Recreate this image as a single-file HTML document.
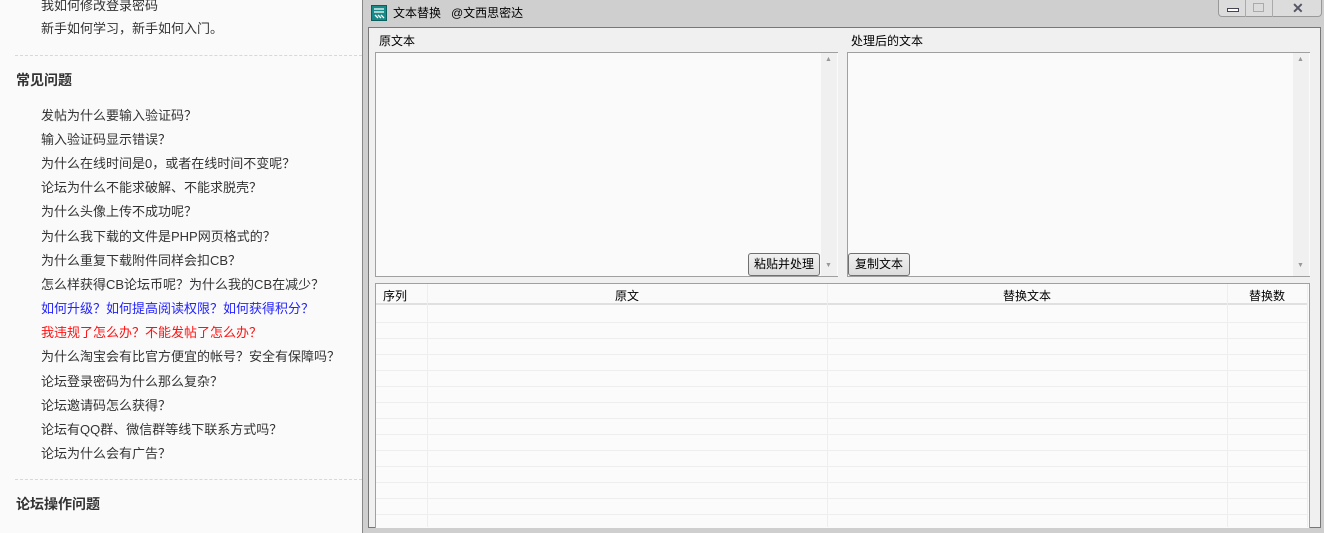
<!DOCTYPE html>
<html><head><meta charset="utf-8"><style>
*{margin:0;padding:0;box-sizing:border-box}
body{width:1324px;height:533px;overflow:hidden;background:#fafafa;position:relative;font-family:"Liberation Sans","Noto Sans CJK SC",sans-serif;}
.t{position:absolute;font-size:13px;line-height:24px;color:#333;white-space:nowrap}
.h{font-weight:bold;font-size:14px;color:#333}
.dash{position:absolute;left:15px;width:347px;border-top:1px dashed #d8d8d8}
.win{position:absolute;left:362px;top:0;width:962px;height:533px;background:#cfcfcf;border-left:1px solid #888;}
.a{position:absolute}
.ws{font-size:12px;color:#000;line-height:16px;white-space:nowrap}
.btn{position:absolute;height:23px;border:1px solid #707070;border-radius:3px;background:linear-gradient(#f2f2f2,#dcdcdc);font-size:12px;line-height:21px;text-align:center;color:#000}
.sb{position:absolute;width:16px;background:#f0f0f0}
.row{position:absolute;left:376px;width:931px;height:1px;background:#eee}
.col{position:absolute;width:1px;background:#eee}
</style></head><body>
<div class="t" style="left:41px;top:-6px">我如何修改登录密码</div>
<div class="t" style="left:41px;top:17px">新手如何学习，新手如何入门。</div>
<div class="dash" style="top:55px"></div>
<div class="t h" style="left:16px;top:68px">常见问题</div>
<div class="t" style="left:41px;top:104px">发帖为什么要输入验证码？</div>
<div class="t" style="left:41px;top:128px">输入验证码显示错误？</div>
<div class="t" style="left:41px;top:152px">为什么在线时间是0，或者在线时间不变呢？</div>
<div class="t" style="left:41px;top:176px">论坛为什么不能求破解、不能求脱壳？</div>
<div class="t" style="left:41px;top:200px">为什么头像上传不成功呢？</div>
<div class="t" style="left:41px;top:225px">为什么我下载的文件是PHP网页格式的？</div>
<div class="t" style="left:41px;top:249px">为什么重复下载附件同样会扣CB？</div>
<div class="t" style="left:41px;top:273px">怎么样获得CB论坛币呢？为什么我的CB在减少？</div>
<div class="t" style="left:41px;top:297px;color:#22f">如何升级？如何提高阅读权限？如何获得积分？</div>
<div class="t" style="left:41px;top:321px;color:#f11">我违规了怎么办？不能发帖了怎么办？</div>
<div class="t" style="left:41px;top:345px">为什么淘宝会有比官方便宜的帐号？安全有保障吗？</div>
<div class="t" style="left:41px;top:370px">论坛登录密码为什么那么复杂？</div>
<div class="t" style="left:41px;top:394px">论坛邀请码怎么获得？</div>
<div class="t" style="left:41px;top:418px">论坛有QQ群、微信群等线下联系方式吗？</div>
<div class="t" style="left:41px;top:442px">论坛为什么会有广告？</div>
<div class="dash" style="top:479px"></div>
<div class="t h" style="left:16px;top:492px">论坛操作问题</div>

<div class="win">
 <div class="a" style="left:8px;top:5px;width:16px;height:16px;background:#178a88;border:1px solid #0b5e5d"><svg width="14" height="14" viewBox="0 0 14 14"><path d="M2 3H12M2 6H12M3 9L6 12M6 9L9 12M9 9L12 12" stroke="#fff" stroke-width="1.3" fill="none"/></svg></div>
 <div class="a ws" style="left:30px;top:5px">文本替换&nbsp;&nbsp;&nbsp;@文西思密达</div>
 <div class="a" style="left:855px;top:0;width:104px;height:17px;border:1px solid #999;border-top:none;border-radius:0 0 4px 4px;background:#dcdcdc"></div>
 <div class="a" style="left:882px;top:0;width:1px;height:17px;background:#aaa"></div>
 <div class="a" style="left:909px;top:0;width:1px;height:17px;background:#aaa"></div>
 <div class="a" style="left:864px;top:8px;width:12px;height:4px;border:1px solid #445;background:#fff"></div>
 <div class="a" style="left:890px;top:3px;width:11px;height:9px;border:1px solid #aaa"></div>
 <div class="a" style="left:929px;top:0px;font-size:14px;font-weight:bold;color:#556">✕</div>
 <div class="a" style="left:5px;top:27px;width:953px;height:501px;background:#f0f0f0;border:1px solid #777"></div>
 <div class="a ws" style="left:16px;top:33px">原文本</div>
 <div class="a ws" style="left:488px;top:33px">处理后的文本</div>
 <div class="a" style="left:12px;top:52px;width:463px;height:225px;background:#fafafa;border:1px solid #a0a0a0;border-right:none"></div>
 <div class="sb" style="left:458px;top:53px;height:223px"></div>
 <div class="a" style="left:462px;top:56px;font-size:7px;color:#999">▲</div>
 <div class="a" style="left:462px;top:262px;font-size:7px;color:#999">▼</div>
 <div class="a" style="left:484px;top:52px;width:463px;height:225px;background:#fafafa;border:1px solid #a0a0a0;border-right:none"></div>
 <div class="sb" style="left:930px;top:53px;height:223px"></div>
 <div class="a" style="left:934px;top:56px;font-size:7px;color:#999">▲</div>
 <div class="a" style="left:934px;top:262px;font-size:7px;color:#999">▼</div>
 <div class="btn" style="left:385px;top:253px;width:72px">粘贴并处理</div>
 <div class="btn" style="left:485px;top:253px;width:62px">复制文本</div>
 <div class="a" style="left:12px;top:283px;width:935px;height:245px;background:#fbfbfb;border:1px solid #a0a0a0;border-bottom:none"></div>
</div>
<div class="a" style="left:376px;top:284px;width:931px;height:21px;background:#fafafa;border-bottom:2px solid #e0e0e0"></div>
<div class="a ws" style="left:383px;top:288px">序列</div>
<div class="a ws" style="left:615px;top:288px">原文</div>
<div class="a ws" style="left:1003px;top:288px">替换文本</div>
<div class="a ws" style="left:1249px;top:288px">替换数</div>
<div class="col" style="left:427px;top:284px;height:243px"></div>
<div class="col" style="left:827px;top:284px;height:243px"></div>
<div class="col" style="left:1227px;top:284px;height:243px"></div>
<div class="col" style="left:1307px;top:284px;height:243px"></div>
<div class="row" style="top:322px"></div><div class="row" style="top:338px"></div><div class="row" style="top:354px"></div><div class="row" style="top:370px"></div><div class="row" style="top:386px"></div><div class="row" style="top:402px"></div><div class="row" style="top:418px"></div><div class="row" style="top:434px"></div><div class="row" style="top:450px"></div><div class="row" style="top:466px"></div><div class="row" style="top:482px"></div><div class="row" style="top:498px"></div><div class="row" style="top:514px"></div>
</body></html>
